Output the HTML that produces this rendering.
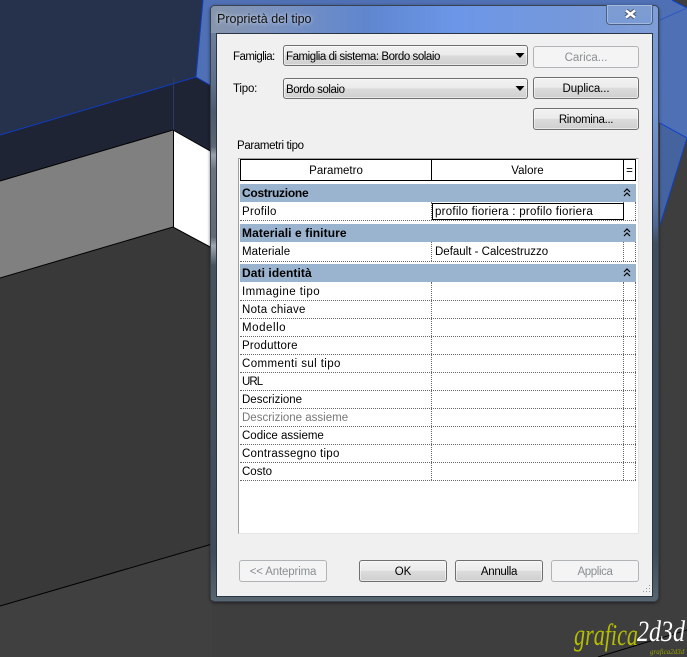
<!DOCTYPE html>
<html><head><meta charset="utf-8"><style>
html,body{margin:0;padding:0;background:#3e3e3e}
#r{position:relative;width:687px;height:657px;overflow:hidden;font-family:"Liberation Sans",sans-serif;font-size:11.5px;color:#000}
#r div{position:absolute;box-sizing:border-box;white-space:nowrap}
.t{line-height:16px;height:16px;margin-top:1px}
.t.b{font-weight:bold;font-size:12px;margin-top:0}
.btn{border:1px solid #707070;border-radius:3px;background:linear-gradient(#f2f2f2 0,#ebebeb 48%,#dcdcdc 50%,#cfcfcf 100%);text-align:center;box-shadow:inset 0 0 0 1px rgba(255,255,255,.5);line-height:22px}
.dis{border:1px solid #b0b4b6;border-radius:3px;background:#f4f4f4;text-align:center;color:#8a8f93;line-height:22px}
.band{left:240px;width:396px;height:18px;background:#9ab3cf}
.h{left:240px;width:396px;height:0;border-top:1px dotted #666}
.v{width:0;border-left:1px dotted #666}
</style></head><body><div id="r">
<svg width="687" height="657" style="position:absolute;left:0;top:0">
<rect width="687" height="657" fill="#3e3e3e"/>
<polygon points="0,0 203,0 196,77 0,135" fill="#26314b"/>
<polygon points="0,135 196,77 215,88 215,157 173,130 0,181" fill="#1e2433"/>
<polygon points="0,181 173,130 173,227 0,278" fill="#808080"/>
<polygon points="173,130 212,152 212,248 173,227" fill="#fff"/>
<polygon points="0,278 173,227 212,248 212,543 0,606" fill="#393939"/>
<polygon points="0,606 212,543 212,657 0,657" fill="#404040"/>
<polygon points="203,0 672,0 687,8 687,138 660,123 640,110 640,80 210,85 196,77" fill="#4f70b4"/>
<polygon points="660,123 687,138 660,225" fill="#45639f"/>
<polygon points="687,138 687,8 672,0 660,0 660,123" fill="#4f70b4"/>
<polyline points="0,135 196,77 215,88" fill="none" stroke="#0f3cc0" stroke-width="1"/>
<polyline points="203,0 196,77" fill="none" stroke="#0f3cc0" stroke-width="1"/>
<polyline points="660,123 687,138 660,225" fill="none" stroke="#1040cc" stroke-width="1"/>
<polyline points="672,0 687,8" fill="none" stroke="#1040cc" stroke-width="1"/>
<polyline points="660,20 687,8" fill="none" stroke="#2f58c0" stroke-width="1"/>
<line x1="173.5" y1="78" x2="173.5" y2="130" stroke="#2a3a66" stroke-width="1"/>
<polyline points="0,181 173,130 212,152" fill="none" stroke="#000" stroke-width="1"/>
<polyline points="0,278 173,227 212,248" fill="none" stroke="#000" stroke-width="1"/>
<line x1="173.5" y1="130" x2="173.5" y2="227" stroke="#000" stroke-width="1"/>
<line x1="0" y1="606" x2="212" y2="544" stroke="#000" stroke-width="1"/>
<line x1="598" y1="657" x2="687" y2="630" stroke="#000" stroke-width="1"/>
<text x="574" y="645" font-family="Liberation Serif" font-style="italic" font-size="31" fill="#b4bd00" textLength="64" lengthAdjust="spacingAndGlyphs">grafica</text>
<text x="637" y="641" font-family="Liberation Serif" font-style="italic" font-size="30" fill="#fff" textLength="48" lengthAdjust="spacingAndGlyphs">2d3d</text>
<text x="650" y="654" font-family="Liberation Serif" font-style="italic" font-size="7" fill="#9aa200">grafica2d3d</text>
</svg>

<!-- window frame -->
<div style="left:210px;top:5px;width:449px;height:597px;border-radius:5px;border:1px solid #39424e;background:linear-gradient(#7f9ed6 0,#7697d4 18%,#6f8ec6 22%,#5f7db2 32%,#4c6690 37%,#3f4d5c 40%,#3f4c5a 92%,#57656f 100%);box-shadow:0 1px 3px rgba(0,0,0,.5)"></div>
<div style="left:211px;top:33px;width:5px;height:567px;background:linear-gradient(#6d7f9a 0,#5d6f8a 9%,#4b5a6e 14%,#5c6570 20%,#9aa3ad 21.5%,#6a7580 24%,#606a75 36%,#a0a9b2 37.5%,#46535f 41%,#3f4c5a 92%,#57656f 100%)"></div>
<div style="left:211px;top:6px;width:447px;height:27px;border-radius:4px 4px 0 0;background:linear-gradient(90deg,#8896ac 0,#7d93bd 12%,#5f86cf 35%,#6c97e8 55%,#7598da 80%,#7f9dd6 100%)"></div>
<div class="t" style="left:217px;top:10px;font-size:12.5px;color:#101010;text-shadow:0 0 4px #dfe8f5">Proprietà del tipo</div>
<div style="left:606px;top:5px;width:47px;height:20px;border:1px solid #4a5f85;border-top:0;border-radius:0 0 4px 4px;background:linear-gradient(#7e9cd0,#7a9bd6);box-shadow:inset 0 0 0 1px #a3b9de"></div>
<svg width="687" height="657" style="position:absolute;left:0;top:0" fill="none">
<path d="M626 10.500L635 17.500M635 10.500L626 17.500" stroke="#4a5670" stroke-width="4.500"/>
<path d="M626 10.500L635 17.500M635 10.500L626 17.500" stroke="#fff" stroke-width="2.500"/>
</svg>
<!-- client -->
<div style="left:216px;top:33px;width:437px;height:564px;background:#f0f0f0;border:1px solid #2b3442"></div>

<div class="t" style="left:233px;top:48px;letter-spacing:-.55px">Famiglia:</div>
<div class="t" style="left:233px;top:80px;letter-spacing:-.2px">Tipo:</div>
<div class="btn" style="left:283px;top:45px;width:245px;height:21px"></div>
<div class="btn" style="left:283px;top:78px;width:245px;height:21px"></div>
<div class="t" style="left:286px;top:48px;letter-spacing:-.45px">Famiglia di sistema: Bordo solaio</div>
<div class="t" style="left:286px;top:81px;letter-spacing:-.45px">Bordo solaio</div>
<svg width="687" height="657" style="position:absolute;left:0;top:0"><polygon points="515.500,53 524.500,53 520,58" fill="#000"/><polygon points="515.500,86 524.500,86 520,91" fill="#000"/></svg>
<div class="dis" style="left:533px;top:46px;width:106px;height:22px">Carica...</div>
<div class="btn" style="left:533px;top:77px;width:106px;height:22px;letter-spacing:-.1px">Duplica...</div>
<div class="btn" style="left:533px;top:108px;width:106px;height:22px;letter-spacing:-.35px">Rinomina...</div>
<div class="t" style="left:237px;top:137px;letter-spacing:-.35px">Parametri tipo</div>

<!-- table -->
<div style="left:238px;top:158px;width:401px;height:376px;background:#fff;border:1px solid;border-color:#a0a0a0 #e4e4e4 #e4e4e4 #a0a0a0"></div>
<div style="left:240px;top:159px;width:396px;height:22px;border:1px solid #000"></div>
<div style="left:431px;top:159px;width:1px;height:22px;background:#000"></div>
<div style="left:623px;top:159px;width:1px;height:22px;background:#000"></div>
<div class="t" style="left:241px;top:162px;width:190px;text-align:center">Parametro</div>
<div class="t" style="left:432px;top:162px;width:191px;text-align:center">Valore</div>
<div class="t" style="left:624px;top:162px;width:11px;text-align:center">=</div>

<div class="band" style="top:184px"></div>
<div class="band" style="top:224px"></div>
<div class="band" style="top:264px"></div>
<div class="t b" style="left:242px;top:185px;letter-spacing:-.27px">Costruzione</div>
<div class="t b" style="left:242px;top:225px;letter-spacing:.1px">Materiali e finiture</div>
<div class="t b" style="left:242px;top:265px;letter-spacing:.08px">Dati identità</div>
<svg width="687" height="657" style="position:absolute;left:0;top:0" fill="none" stroke="#000" stroke-width="1.2">
<path d="M624 192l3-3 3 3M624 196l3-3 3 3"/>
<path d="M624 232l3-3 3 3M624 236l3-3 3 3"/>
<path d="M624 272l3-3 3 3M624 276l3-3 3 3"/>
</svg>

<div class="h" style="top:220px"></div>
<div class="h" style="top:261px"></div>
<div class="h" style="top:300px"></div><div class="h" style="top:318px"></div><div class="h" style="top:336px"></div>
<div class="h" style="top:354px"></div><div class="h" style="top:372px"></div><div class="h" style="top:390px"></div>
<div class="h" style="top:408px"></div><div class="h" style="top:426px"></div><div class="h" style="top:444px"></div>
<div class="h" style="top:462px"></div><div class="h" style="top:480px"></div>
<div class="v" style="left:431px;top:202px;height:18px"></div><div class="v" style="left:623px;top:202px;height:18px"></div><div class="v" style="left:635px;top:202px;height:18px"></div>
<div class="v" style="left:431px;top:242px;height:19px"></div><div class="v" style="left:623px;top:242px;height:19px"></div><div class="v" style="left:635px;top:242px;height:19px"></div>
<div class="v" style="left:431px;top:282px;height:198px"></div><div class="v" style="left:623px;top:282px;height:198px"></div><div class="v" style="left:635px;top:282px;height:198px"></div>

<div style="left:432px;top:203px;width:192px;height:17px;background:#fff;border:1px solid #000"></div>
<div class="t" style="left:435px;top:203px;letter-spacing:.26px">profilo fioriera : profilo fioriera</div>
<div class="t" style="left:242px;top:203px;letter-spacing:.3px">Profilo</div>
<div class="t" style="left:242px;top:243px;letter-spacing:.1px">Materiale</div>
<div class="t" style="left:435px;top:243px">Default - Calcestruzzo</div>
<div class="t" style="left:242px;top:283px;letter-spacing:.45px">Immagine tipo</div>
<div class="t" style="left:242px;top:301px;letter-spacing:.27px">Nota chiave</div>
<div class="t" style="left:242px;top:319px;letter-spacing:.55px">Modello</div>
<div class="t" style="left:242px;top:337px;letter-spacing:.2px">Produttore</div>
<div class="t" style="left:242px;top:355px;letter-spacing:.4px">Commenti sul tipo</div>
<div class="t" style="left:242px;top:373px;letter-spacing:-.9px">URL</div>
<div class="t" style="left:242px;top:391px">Descrizione</div>
<div class="t" style="left:242px;top:409px;color:#777">Descrizione assieme</div>
<div class="t" style="left:242px;top:427px">Codice assieme</div>
<div class="t" style="left:242px;top:445px;letter-spacing:.25px">Contrassegno tipo</div>
<div class="t" style="left:242px;top:463px">Costo</div>

<div class="dis" style="left:239px;top:560px;width:88px;height:22px;letter-spacing:-.15px">&lt;&lt; Anteprima</div>
<div class="btn" style="left:359px;top:560px;width:88px;height:22px">OK</div>
<div class="btn" style="left:455px;top:560px;width:88px;height:22px;letter-spacing:-.3px">Annulla</div>
<div class="dis" style="left:551px;top:560px;width:88px;height:22px;letter-spacing:-.4px">Applica</div>
<svg width="687" height="657" style="position:absolute;left:0;top:0" fill="#9a9a9a">
<rect x="649" y="585" width="1" height="1"/>
<rect x="646" y="588" width="1" height="1"/><rect x="649" y="588" width="1" height="1"/>
<rect x="643" y="591" width="1" height="1"/><rect x="646" y="591" width="1" height="1"/><rect x="649" y="591" width="1" height="1"/>
</svg>
</div></body></html>
